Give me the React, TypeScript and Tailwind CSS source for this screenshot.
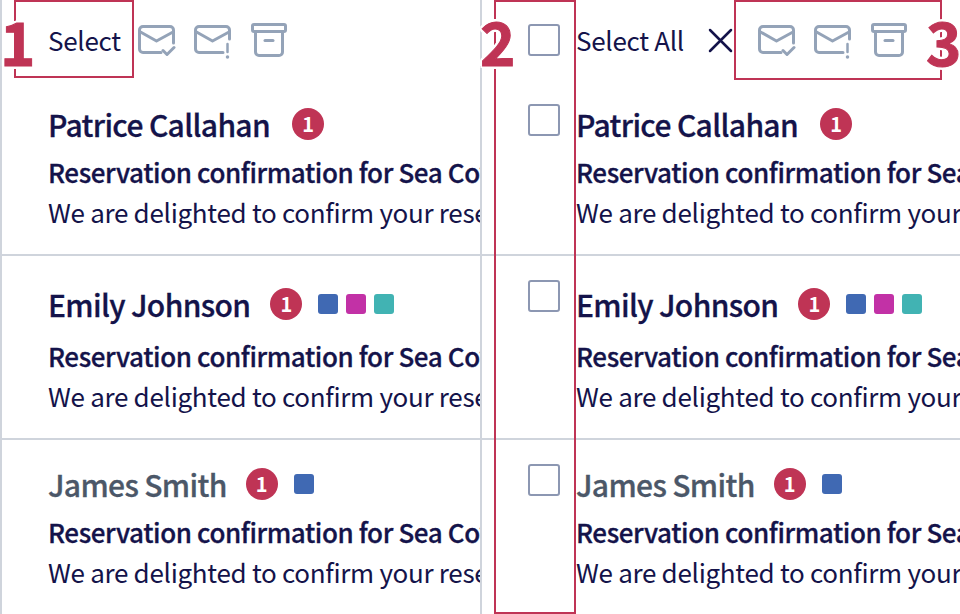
const ink = "text-[#14134a]";

function MailCheck() {
  return (
    <svg width="38" height="38" viewBox="0 0 38 38" fill="none" stroke="#94a3b8" strokeWidth="3" strokeLinecap="round" strokeLinejoin="round">
      <path d="M23 30.500H5a3.500 3.500 0 0 1-3.500-3.500V8a3.500 3.500 0 0 1 3.500-3.500h27a3.500 3.500 0 0 1 3.500 3.500v13" />
      <path d="M2.500 10 18.500 19 35 10" />
      <path d="M25 28.500l4 4 7-7" strokeWidth="3" />
    </svg>
  );
}

function MailAlert() {
  return (
    <svg width="38" height="38" viewBox="0 0 38 38" fill="none" stroke="#94a3b8" strokeWidth="3" strokeLinecap="round" strokeLinejoin="round">
      <path d="M29 30.500H5a3.500 3.500 0 0 1-3.500-3.500V8a3.500 3.500 0 0 1 3.500-3.500h27a3.500 3.500 0 0 1 3.500 3.500v9" />
      <path d="M2.500 10 18.500 19 35 10" />
      <path d="M33.500 22v8" strokeWidth="2.500" />
      <path d="M33.500 35v.1" strokeWidth="3.500" />
    </svg>
  );
}

function Archive() {
  return (
    <svg width="38" height="38" viewBox="0 0 38 38" fill="none" stroke="#94a3b8" strokeWidth="3" strokeLinecap="round" strokeLinejoin="round">
      <rect x="2.500" y="2.500" width="33" height="7" rx="1.500" />
      <path d="M5.500 10v20a3.500 3.500 0 0 0 3.500 3.500h20a3.500 3.500 0 0 0 3.500-3.500V10" />
      <path d="M15 18.500h8" />
    </svg>
  );
}

function Icons() {
  return (
    <div className="flex items-start gap-[18px]">
      <MailCheck />
      <MailAlert />
      <Archive />
    </div>
  );
}

function Check() {
  return <div className="w-8 h-8 shrink-0 rounded-[3px] border-2 border-[#8c97b2] bg-white" />;
}

const tagColors: Record<string, string> = {
  blue: "bg-[#4069b3]",
  pink: "bg-[#c231a6]",
  teal: "bg-[#41b3b3]",
};

function Row({ name, muted, tags, className, nameTop, subjectTop, badgeGap, select }: { name: string; muted?: boolean; tags: string[]; className: string; nameTop: string; subjectTop: string; badgeGap: string; select?: boolean }) {
  return (
    <div className={`flex ${className}`}>
      {select && (
        <div className="w-[48px] ml-[46px] mt-6 shrink-0">
          <Check />
        </div>
      )}
      <div className={`${select ? "" : "pl-[46px]"} ${nameTop} flex-1 min-w-0`}>
        <div className="flex items-center h-9">
          <span className={`text-[30px] leading-9 font-medium tracking-[-0.65px] [-webkit-text-stroke:0.3px_currentColor] ${muted ? "text-[#4b5768]" : ink}`}>{name}</span>
          <span className={`${badgeGap} w-8 h-8 rounded-full bg-[#bf3455] text-white text-[20px] leading-8 font-bold text-center`}>1</span>
          <div className="flex gap-2 ml-4">
            {tags.map((t, i) => (
              <span key={i} className={`w-5 h-5 rounded-[3px] ${tagColors[t]}`} />
            ))}
          </div>
        </div>
        <div className={`${subjectTop} text-[26px] leading-[34px] font-medium tracking-[-0.4px] [-webkit-text-stroke:0.3px_currentColor] whitespace-nowrap ${ink}`}>Reservation confirmation for Sea Cove Resort stay</div>
        <div className={`mt-[6px] text-[26px] leading-[34px] tracking-[-0.3px] whitespace-nowrap ${ink}`}>We are delighted to confirm your reservation at</div>
      </div>
    </div>
  );
}

function Panel({ select }: { select?: boolean }) {
  return (
    <div className="w-[480px] h-[614px] overflow-hidden border-l-2 border-[#cfd4dc]">
      <div className="flex items-center h-[80px]">
        {select ? (
          <>
            <div className="ml-[46px] w-[48px] shrink-0">
              <Check />
            </div>
            <span className={`text-[26px] leading-[34px] tracking-[-0.3px] ${ink}`}>Select All</span>
            <svg className="ml-[24px] mr-px" width="25" height="25" viewBox="0 0 25 25" fill="none" stroke="#14134a" strokeWidth="2.500" strokeLinecap="round">
              <path d="M2 2l21 21M23 2 2 23" />
            </svg>
            <div className="ml-6 mt-[2px]">
              <Icons />
            </div>
          </>
        ) : (
          <>
            <span className={`pl-[46px] text-[26px] leading-[34px] tracking-[-0.3px] ${ink}`}>Select</span>
            <div className="ml-[17px] mt-[2px]">
              <Icons />
            </div>
          </>
        )}
      </div>
      <Row select={select} name="Patrice Callahan" tags={[]} className="h-[176px] border-b-2 border-[#cfd4dc]" nameTop="pt-[26px]" subjectTop="mt-[13px]" badgeGap="ml-[22px]" />
      <Row select={select} name="Emily Johnson" tags={["blue", "pink", "teal"]} className="h-[184px] border-b-2 border-[#cfd4dc]" nameTop="pt-[30px]" subjectTop="mt-[17px]" badgeGap="ml-[20px]" />
      <Row select={select} name="James Smith" muted tags={["blue"]} className="h-[174px]" nameTop="pt-[26px]" subjectTop="mt-[13px]" badgeGap="ml-[19px]" />
    </div>
  );
}

function Num({ children, className }: { children: string; className: string }) {
  return (
    <span className={`absolute text-[60px] leading-[60px] font-bold text-[#bf3455] [-webkit-text-stroke:1px_#bf3455] [text-shadow:3px_0_white,-3px_0_white,0_3px_white,0_-3px_white,2px_2px_white,-2px_2px_white,2px_-2px_white,-2px_-2px_white] ${className}`}>{children}</span>
  );
}

export default function App() {
  return (
    <div className="relative w-[960px] h-[614px] overflow-hidden bg-white flex font-['Noto_Sans_CJK_SC','Source_Sans_Pro',sans-serif]">
      <Panel />
      <Panel select />
      <div className="absolute left-[14px] top-0 w-[120px] h-[78px] border-2 border-[#bf3455]" />
      <div className="absolute left-[494px] top-0 w-[82px] h-[614px] border-2 border-[#bf3455]" />
      <div className="absolute left-[734px] top-0 w-[208px] h-[80px] border-2 border-[#bf3455]" />
      <Num className="left-[0px] top-[10px]">1</Num>
      <Num className="left-[480px] top-[10px]">2</Num>
      <Num className="left-[926px] top-[10px]">3</Num>
    </div>
  );
}
